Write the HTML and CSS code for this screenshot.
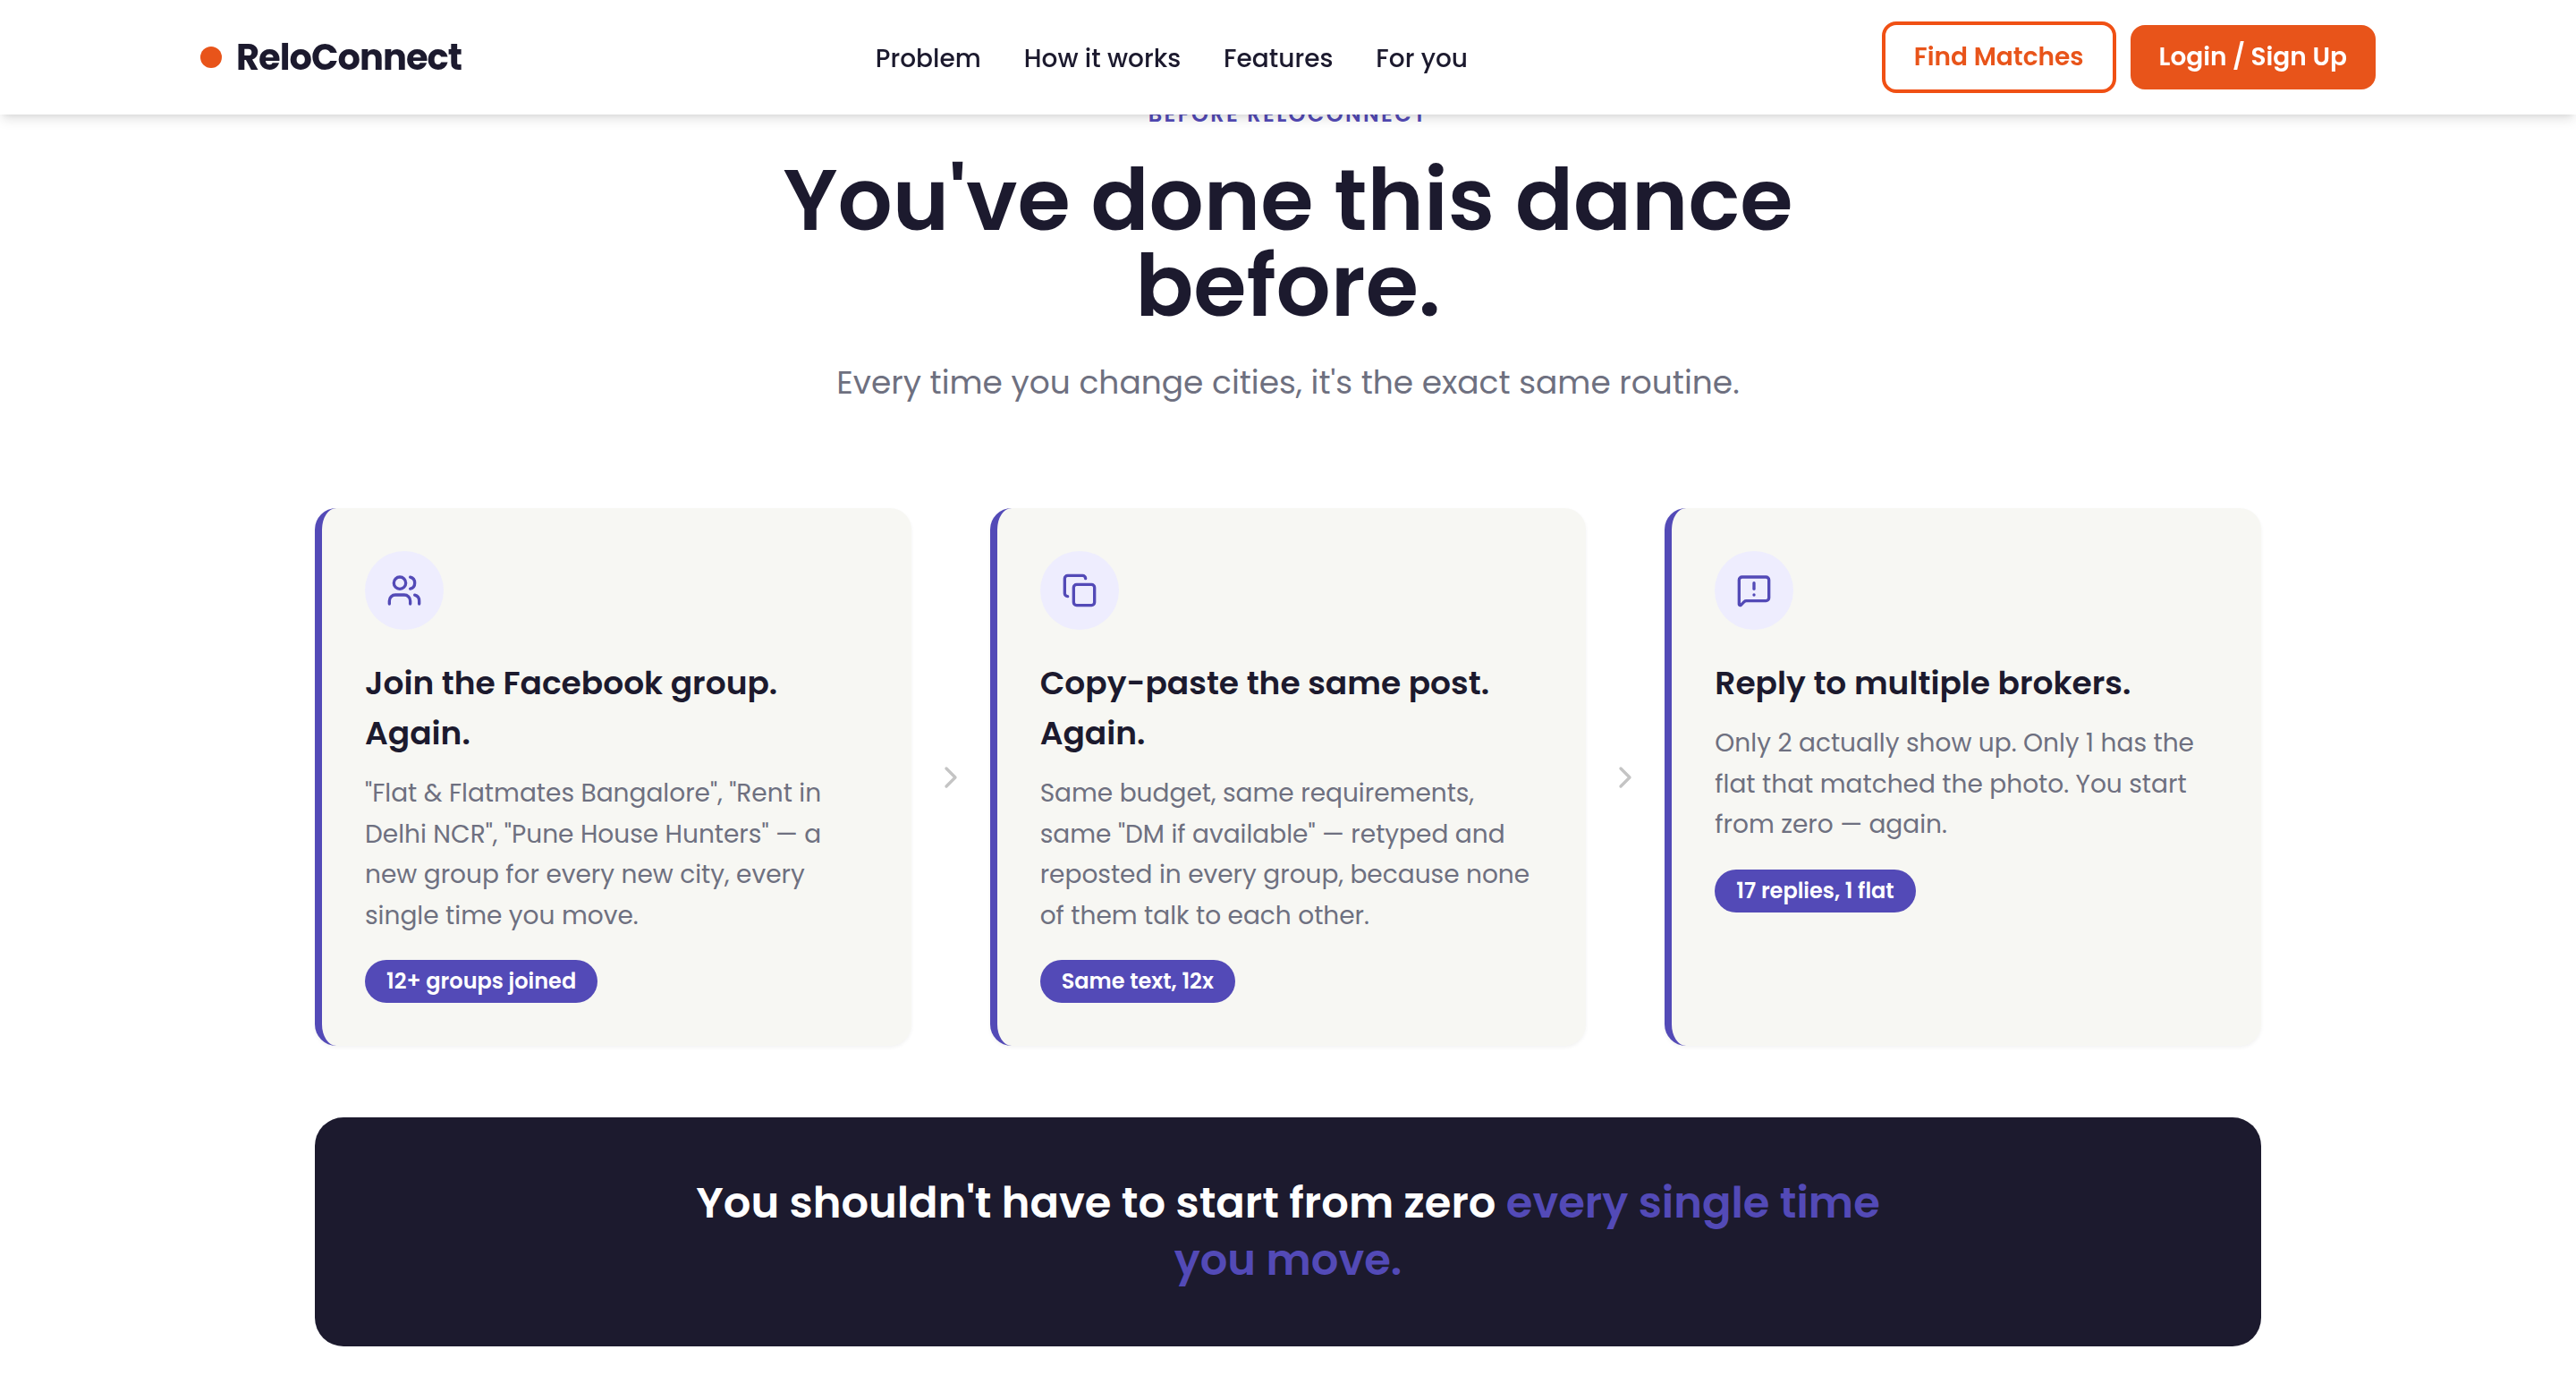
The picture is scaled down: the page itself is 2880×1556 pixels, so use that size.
FILE: index.html
```
<!DOCTYPE html>
<html lang="en">
<head>
    <meta charset="utf-8">
    <title>ReloConnect</title>
    <link rel="stylesheet" href="styles.css">
</head>
<body>
<header class="header">
    <div class="header-inner">
        <a class="logo" href="#"><span class="logo-dot"></span>ReloConnect</a>
        <nav class="nav">
            <div><a href="#problem">Problem</a></div>
            <div><a href="#how">How it works</a></div>
            <div><a href="#features">Features</a></div>
            <div><a href="#for-you">For you</a></div>
        </nav>
        <div class="actions">
            <a class="btn btn-outline" href="#">Find Matches</a>
            <a class="btn btn-solid" href="#">Login / Sign Up</a>
        </div>
    </div>
</header>

<section id="problem" class="problem">
    <div class="intro">
        <p class="eyebrow">Before ReloConnect</p>
        <h2>You've done this dance before.</h2>
        <p class="subtitle">Every time you change cities, it's the exact same routine.</p>
    </div>

    <div class="steps">
        <div class="card">
            <div class="card-icon">
                <svg class="icon" viewBox="0 0 24 24">
                    <path d="M16 21v-2a4 4 0 0 0-4-4H6a4 4 0 0 0-4 4v2" />
                    <circle cx="9" cy="7" r="4" />
                    <path d="M22 21v-2a4 4 0 0 0-3-3.87" />
                    <path d="M16 3.13a4 4 0 0 1 0 7.75" />
                </svg>
            </div>
            <h3>Join the Facebook group. Again.</h3>
            <p>"Flat &amp; Flatmates Bangalore", "Rent in Delhi NCR", "Pune House Hunters" — a new group for every new city, every single time you move.</p>
            <span class="badge">12+ groups joined</span>
        </div>

        <div class="arrow">
            <svg class="icon" viewBox="0 0 24 24"><path d="m9 18 6-6-6-6" /></svg>
        </div>

        <div class="card">
            <div class="card-icon">
                <svg class="icon" viewBox="0 0 24 24">
                    <rect width="14" height="14" x="8" y="8" rx="2" ry="2" />
                    <path d="M4 16c-1.1 0-2-.9-2-2V4c0-1.1.9-2 2-2h10c1.1 0 2 .9 2 2" />
                </svg>
            </div>
            <h3>Copy-paste the same post. Again.</h3>
            <p>Same budget, same requirements, same "DM if available" — retyped and reposted in every group, because none of them talk to each other.</p>
            <span class="badge">Same text, 12x</span>
        </div>

        <div class="arrow">
            <svg class="icon" viewBox="0 0 24 24"><path d="m9 18 6-6-6-6" /></svg>
        </div>

        <div class="card">
            <div class="card-icon">
                <svg class="icon" viewBox="0 0 24 24">
                    <path d="M22 17a2 2 0 0 1-2 2H6.828a2 2 0 0 0-1.414.586l-2.202 2.202A.71.71 0 0 1 2 21.286V5a2 2 0 0 1 2-2h16a2 2 0 0 1 2 2z" />
                    <path d="M12 15h.01" />
                    <path d="M12 7v4" />
                </svg>
            </div>
            <h3>Reply to multiple brokers.</h3>
            <p>Only 2 actually show up. Only 1 has the flat that matched the photo. You start from zero — again.</p>
            <span class="badge">17 replies, 1 flat</span>
        </div>
    </div>

    <div class="banner">
        <p>You shouldn't have to start from zero <span>every single time</span> <span>you move.</span></p>
    </div>
</section>
</body>
</html>
```
FILE: styles.css
```
* { box-sizing: border-box; margin: 0; padding: 0; }
body { background: #fff; color: #1c1a2e; font-family: "Poppins", "Inter", sans-serif; font-size: 32px; line-height: 48px; overflow: hidden; }
a { color: inherit; text-decoration: none; }

/* Header */
.header { position: fixed; top: 0; left: 0; right: 0; height: 128px; background: #fff; box-shadow: 0 8px 12px -2px rgba(0,0,0,0.1), 0 4px 8px -4px rgba(0,0,0,0.1); z-index: 10; }
.header-inner { width: 2432px; height: 100%; margin: 0 auto; display: flex; align-items: center; justify-content: space-between; }
.logo { display: flex; align-items: center; gap: 16px; font-size: 40px; line-height: 56px; font-weight: 700; letter-spacing: -1px; }
.logo-dot { width: 24px; height: 24px; border-radius: 50%; background: #e8541a; }
.nav { display: flex; gap: 48px; padding-top: 2px; }
.nav a { font-size: 28px; font-weight: 500; }
.actions { display: flex; align-items: center; gap: 16px; }
.btn { padding: 16px 32px; border-radius: 16px; font-size: 28px; line-height: 40px; font-weight: 600; }
.btn-outline { border: 4px solid #f05014; color: #e8541a; }
.btn-solid { background: #e8541a; color: #fff; }

/* Problem section */
.problem { width: 2176px; margin: 0 auto; padding-top: 112px; }
.intro { max-width: 1344px; margin: 0 auto 112px; text-align: center; }
.eyebrow { color: #534ab7; font-size: 24px; line-height: 32px; font-weight: 600; letter-spacing: 2.4px; text-transform: uppercase; }
h2 { margin: 32px 0; font-size: 96px; line-height: 96px; font-weight: 600; }
.subtitle { color: #6e7080; font-size: 36px; line-height: 56px; }

.steps { display: grid; grid-template-columns: 1fr 88px 1fr 88px 1fr; }
.card { padding: 48px; background: #f7f7f3; border-left: 8px solid #534ab7; border-radius: 24px; box-shadow: 0 2px 4px rgba(0,0,0,0.05); }
.card-icon { width: 88px; height: 88px; margin-bottom: 32px; display: flex; align-items: center; justify-content: center; border-radius: 50%; background: #eeedfe; color: #534ab7; }
.icon { width: 40px; height: 40px; fill: none; stroke: currentColor; stroke-width: 2; stroke-linecap: round; stroke-linejoin: round; }
.card h3 { margin-bottom: 16px; font-size: 36px; line-height: 56px; font-weight: 600; }
.card p { color: #6e7080; font-size: 28px; line-height: 45.5px; }
.badge { display: block; width: fit-content; margin-top: 27px; padding: 8px 24px; border-radius: 24px; background: #534ab7; color: #fff; font-size: 24px; line-height: 32px; font-weight: 600; }
.arrow { display: flex; align-items: center; justify-content: center; color: #c4c4c4; }

.banner { margin-top: 80px; padding: 64px; border-radius: 32px; background: #1c1a2e; color: #fff; text-align: center; }
.banner p { max-width: 1344px; margin: 0 auto; font-size: 48px; line-height: 64px; font-weight: 600; }
.banner span { color: #534ab7; }
```
